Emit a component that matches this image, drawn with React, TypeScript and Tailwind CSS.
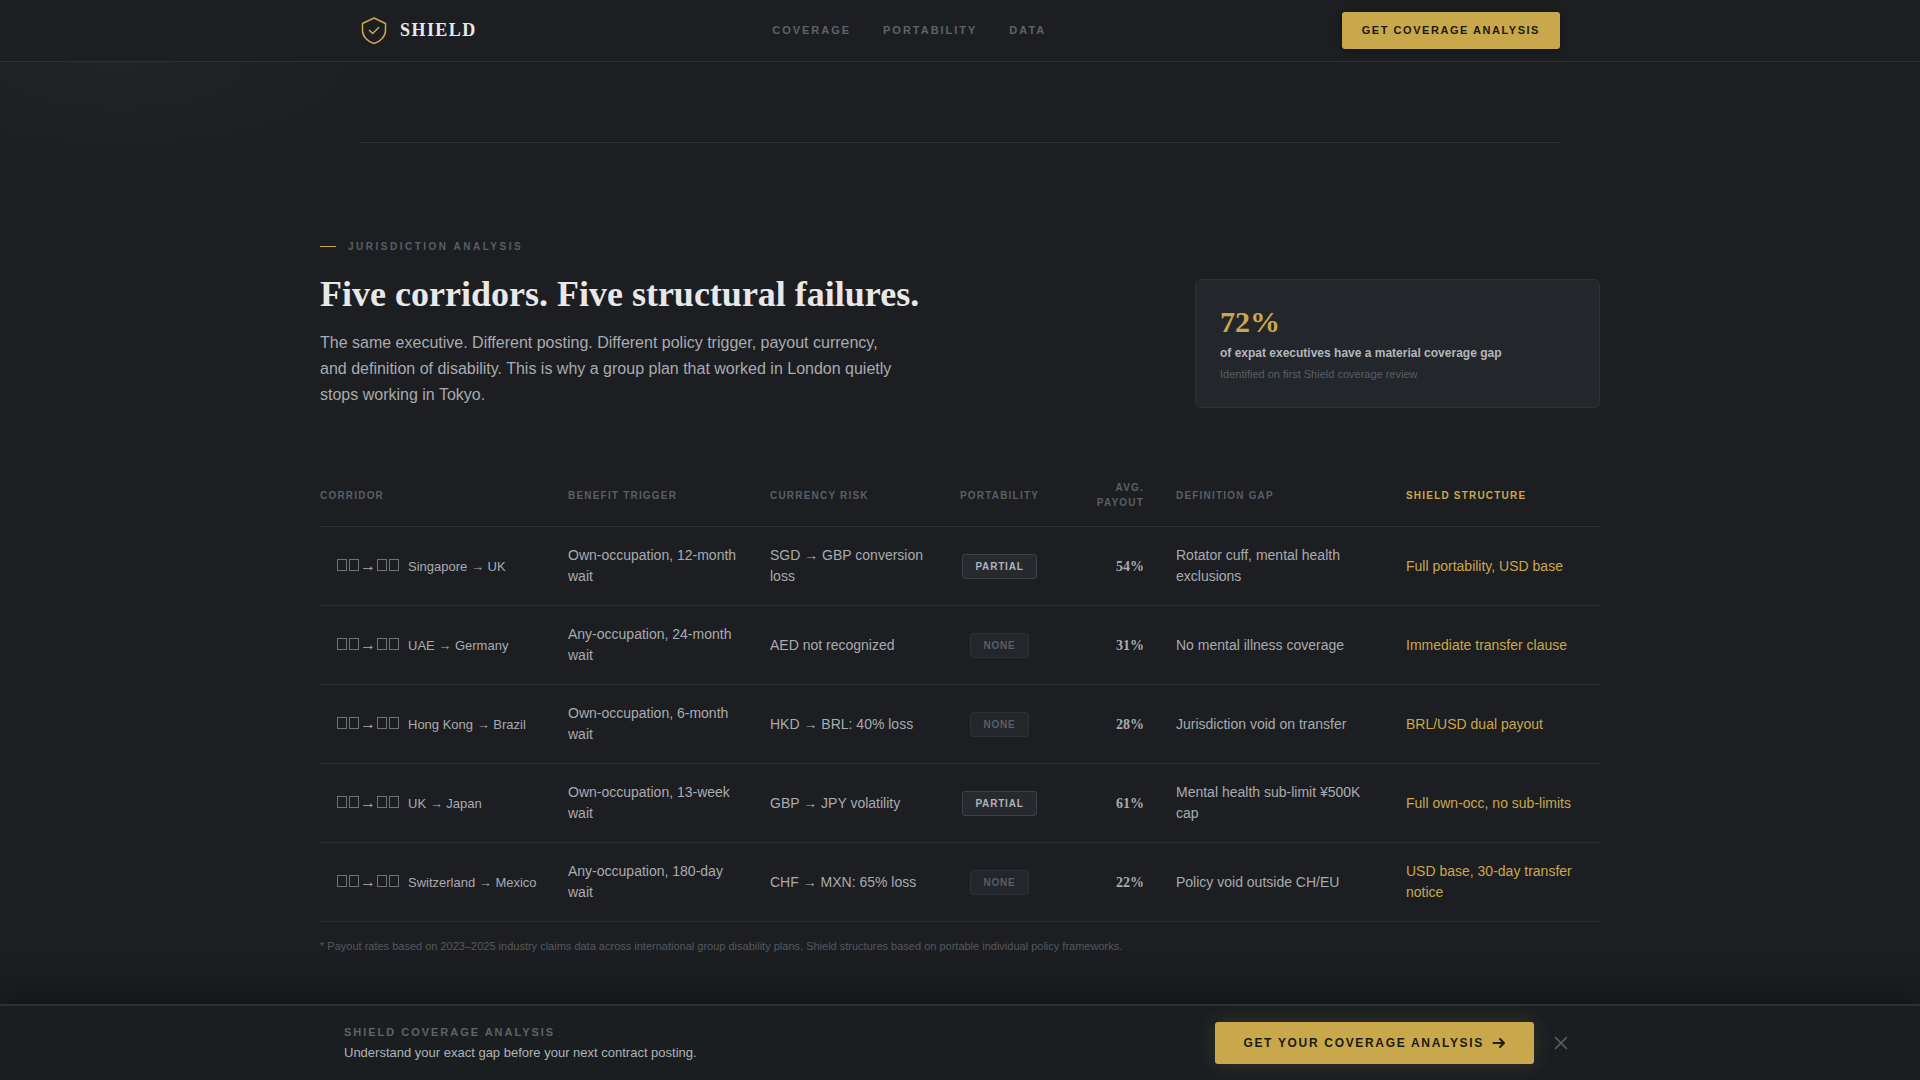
import clsx from "clsx";

const NAV_LINKS = [
  { label: "Coverage", href: "#coverage" },
  { label: "Portability", href: "#portability" },
  { label: "Data", href: "#data" },
];

type Corridor = {
  name: string;
  trigger: string;
  currency: string;
  portability: "Partial" | "None";
  payout: string;
  gap: string;
  structure: string;
};

const CORRIDORS: Corridor[] = [
  {
    name: "Singapore → UK",
    trigger: "Own-occupation, 12-month wait",
    currency: "SGD → GBP conversion loss",
    portability: "Partial",
    payout: "54%",
    gap: "Rotator cuff, mental health exclusions",
    structure: "Full portability, USD base",
  },
  {
    name: "UAE → Germany",
    trigger: "Any-occupation, 24-month wait",
    currency: "AED not recognized",
    portability: "None",
    payout: "31%",
    gap: "No mental illness coverage",
    structure: "Immediate transfer clause",
  },
  {
    name: "Hong Kong → Brazil",
    trigger: "Own-occupation, 6-month wait",
    currency: "HKD → BRL: 40% loss",
    portability: "None",
    payout: "28%",
    gap: "Jurisdiction void on transfer",
    structure: "BRL/USD dual payout",
  },
  {
    name: "UK → Japan",
    trigger: "Own-occupation, 13-week wait",
    currency: "GBP → JPY volatility",
    portability: "Partial",
    payout: "61%",
    gap: "Mental health sub-limit ¥500K cap",
    structure: "Full own-occ, no sub-limits",
  },
  {
    name: "Switzerland → Mexico",
    trigger: "Any-occupation, 180-day wait",
    currency: "CHF → MXN: 65% loss",
    portability: "None",
    payout: "22%",
    gap: "Policy void outside CH/EU",
    structure: "USD base, 30-day transfer notice",
  },
];

function ShieldLogo() {
  return (
    <svg className="size-7" viewBox="0 0 28 28" fill="none" stroke="#c9a84c" strokeLinejoin="round" aria-hidden="true">
      <path d="M14 2 25.5 7.5V14.5C25.5 20.5 20.5 25.5 14 27.5 7.5 25.5 2.5 20.5 2.5 14.5V7.5Z" strokeWidth="1.5" />
      <path d="M9.5 14.5 12.7 17.5 18.7 11.5" strokeWidth="1.5" strokeLinecap="round" />
    </svg>
  );
}

function Header() {
  return (
    <header className="sticky top-0 z-20 border-b border-[#2d3034] bg-[#1c1e21]">
      <div className="mx-auto flex h-[61px] max-w-[1200px] items-center justify-between">
        <a href="#top" className="flex items-center gap-3 pb-0.5">
          <ShieldLogo />
          <span className="font-['Liberation_Serif',serif] text-lg font-bold tracking-[0.08em] text-[#e8e8ea]">
            SHIELD
          </span>
        </a>
        <nav className="flex items-center gap-8">
          {NAV_LINKS.map(({ label, href }) => (
            <a key={href} href={href} className="text-[11px] font-bold uppercase tracking-[0.18em] text-[#5f6268]">
              {label}
            </a>
          ))}
        </nav>
        <button
          type="button"
          className="h-[37px] rounded-[3px] bg-[#c9a84c] px-5 text-[11px] font-bold uppercase tracking-[0.14em] text-[#1c1a14] shadow-[0_2px_8px_rgba(0,0,0,0.35)]"
        >
          Get Coverage Analysis
        </button>
      </div>
    </header>
  );
}

function StatCard() {
  return (
    <aside className="w-[405px] shrink-0 rounded-md border border-[#2f3336] bg-[#23262a] p-6">
      <p className="mb-1 font-['Liberation_Serif',serif] text-[30px] font-bold leading-9 text-[#c9a84c]">72%</p>
      <p className="text-xs font-bold leading-[18px] text-[#b4b7bd]">of expat executives have a material coverage gap</p>
      <p className="mt-1 text-[11px] leading-[17px] text-[#5a5e65]">Identified on first Shield coverage review</p>
    </aside>
  );
}

function FlagBoxes() {
  return (
    <>
      <span className="mx-px inline-block h-3 w-2.5 border border-[#6f7175]" />
      <span className="mx-px inline-block h-3 w-2.5 border border-[#6f7175]" />
    </>
  );
}

function PortabilityBadge({ value }: { value: Corridor["portability"] }) {
  return (
    <span
      className={clsx(
        "inline-block rounded-[3px] border px-3 py-1 align-middle text-[10px] font-bold uppercase leading-[15px] tracking-[0.08em]",
        value === "Partial"
          ? "border-[#3c4145] bg-[#26292d] text-[#b0b2b7]"
          : "border-[#2d3135] bg-[#23262b] text-[#5a5e66]"
      )}
    >
      {value}
    </span>
  );
}

function CorridorTable() {
  return (
    <table className="w-full table-fixed border-separate border-spacing-0 text-left text-sm leading-[21px] text-[#a9abb0]">
      <colgroup>
        <col className="w-[232px]" />
        <col className="w-[202px]" />
        <col className="w-[189px]" />
        <col className="w-[113px]" />
        <col className="w-[104px]" />
        <col className="w-[230px]" />
        <col className="w-[210px]" />
      </colgroup>
      <thead className="text-[10px] uppercase leading-[15px] tracking-[0.12em] text-[#5a5e66] [&_th]:border-b [&_th]:border-[#2f3235]">
        <tr>
          <th scope="col" className="p-4 pl-0">Corridor</th>
          <th scope="col" className="p-4">Benefit Trigger</th>
          <th scope="col" className="p-4">Currency Risk</th>
          <th scope="col" className="p-4 text-center">Portability</th>
          <th scope="col" className="p-4 text-right">Avg. Payout</th>
          <th scope="col" className="p-4">Definition Gap</th>
          <th scope="col" className="p-4 text-[#c9a84c]">Shield Structure</th>
        </tr>
      </thead>
      <tbody className="[&_td]:border-b [&_td]:border-[#2a2d30] [&_td]:px-4 [&_td]:py-[18px]">
        {CORRIDORS.map((row) => (
          <tr key={row.name}>
            <td className="whitespace-nowrap">
              <span className="mr-2 text-base" aria-hidden="true">
                <FlagBoxes />→<FlagBoxes />
              </span>
              <span className="text-[13px]">{row.name}</span>
            </td>
            <td>{row.trigger}</td>
            <td>{row.currency}</td>
            <td className="text-center">
              <PortabilityBadge value={row.portability} />
            </td>
            <td className="text-right font-['Liberation_Serif',serif] font-bold">{row.payout}</td>
            <td>{row.gap}</td>
            <td className="text-[#c9a84c]">{row.structure}</td>
          </tr>
        ))}
      </tbody>
    </table>
  );
}

function StickyBar() {
  return (
    <div className="sticky bottom-0 z-10 border-t-2 border-[#2f302c] bg-[#1a1e21] shadow-[0_-8px_40px_rgba(0,0,0,0.4)]">
      <div className="mx-auto flex h-[74px] max-w-[1280px] items-center justify-between px-6">
        <div>
          <p className="mb-0.5 text-[11px] font-bold uppercase leading-[17px] tracking-[0.18em] text-[#5f6268]">
            Shield Coverage Analysis
          </p>
          <p className="text-[13px] leading-5 text-[#b0b2b7]">Understand your exact gap before your next contract posting.</p>
        </div>
        <div className="flex items-center gap-3">
          <button
            type="button"
            className="flex h-[42px] items-center gap-2 rounded-[3px] bg-[#c9a84c] px-7 text-xs font-bold uppercase tracking-[0.14em] text-[#1c1a14] shadow-[0_0_20px_rgba(201,168,76,0.18)]"
          >
            Get Your Coverage Analysis
            <svg className="size-3.5" viewBox="0 0 14 14" fill="none" stroke="currentColor" strokeWidth="2" strokeLinecap="round" strokeLinejoin="round" aria-hidden="true">
              <path d="M1.5 7H12M8 3 12 7 8 11" />
            </svg>
          </button>
          <button type="button" aria-label="Dismiss" className="p-2 text-[#5f6268]">
            <svg className="size-3.5" viewBox="0 0 14 14" fill="none" stroke="currentColor" strokeWidth="1.5" strokeLinecap="round" aria-hidden="true">
              <path d="M1.5 1.5 12.5 12.5M12.5 1.5 1.5 12.5" />
            </svg>
          </button>
        </div>
      </div>
    </div>
  );
}

export default function App() {
  return (
    <div className="flex min-h-screen flex-col bg-[#1c1e21] font-['Liberation_Sans',Arial,sans-serif]">
      <Header />
      <main className="flex-1 bg-[radial-gradient(ellipse_300px_110px_at_120px_0px,#222326,transparent)] pt-20">
        <hr className="mx-auto max-w-[1200px] border-[#2c2f32]" />
        <section id="coverage" className="mx-auto max-w-[1280px] pt-24 pb-10">
          <div className="mb-14 flex items-end justify-between">
            <div>
              <p className="mb-5 flex items-center gap-3 text-[10px] font-bold uppercase leading-[15px] tracking-[0.25em] text-[#5a5e66]">
                <span className="h-px w-4 bg-[#c9a84c]" />
                Jurisdiction Analysis
              </p>
              <h2 className="mb-4 font-['Liberation_Serif',serif] text-4xl font-bold leading-10 text-[#e8e8ea]">
                Five corridors. Five structural failures.
              </h2>
              <p className="max-w-[580px] text-base leading-[26px] text-[#a9abb0]">
                The same executive. Different posting. Different policy trigger, payout currency, and definition of
                disability. This is why a group plan that worked in London quietly stops working in Tokyo.
              </p>
            </div>
            <StatCard />
          </div>
          <CorridorTable />
          <p className="mt-4 text-[11px] leading-4 text-[#55585f]">
            * Payout rates based on 2023–2025 industry claims data across international group disability plans. Shield
            structures based on portable individual policy frameworks.
          </p>
        </section>
      </main>
      <StickyBar />
    </div>
  );
}
